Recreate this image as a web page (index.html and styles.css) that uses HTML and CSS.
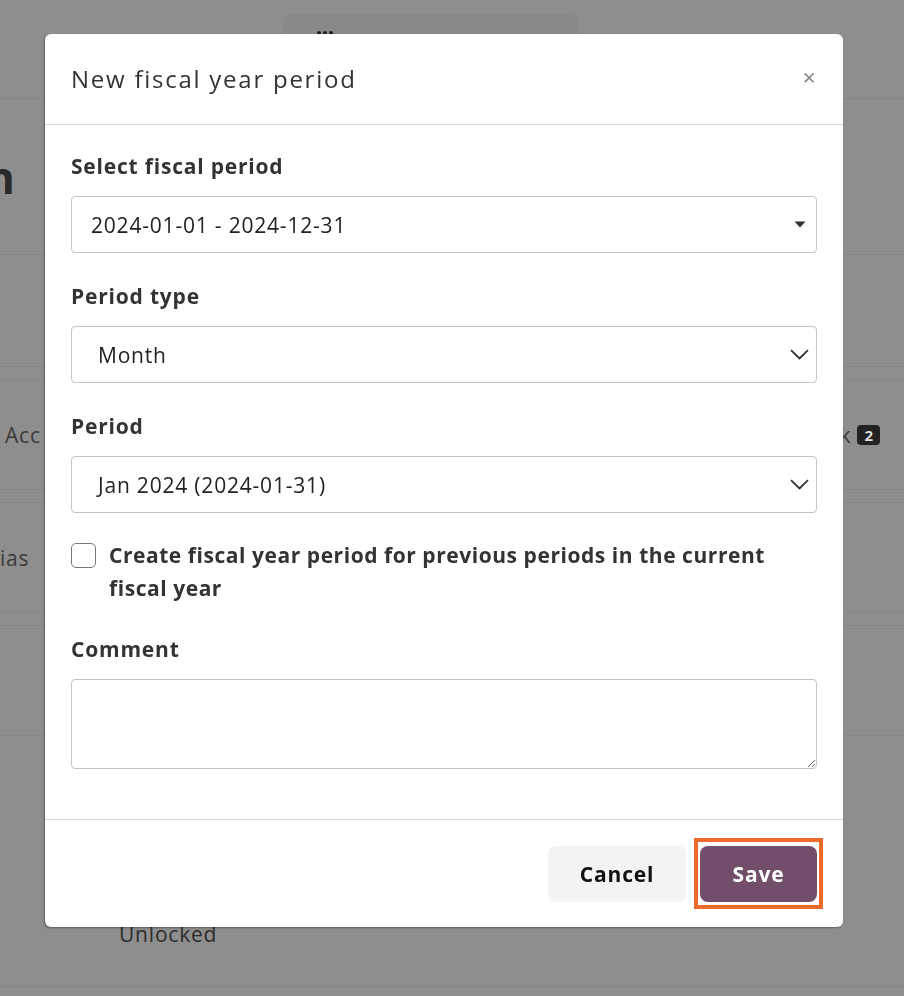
FILE: index.html
```html
<!DOCTYPE html>
<html lang="en">
<head>
<meta charset="utf-8">
<title>New fiscal year period</title>
<link rel="stylesheet" href="styles.css">
</head>
<body>
<div class="page">
  <div class="topbar">
    <div class="pill"><span class="dots"><i></i><i></i><i></i></span></div>
  </div>
  <div class="heading"><span class="h1">n</span></div>
  <div class="row empty"></div>
  <div class="band"></div>
  <div class="row r1"><span class="cell-left">Acc</span><span class="cell-right">k <b class="badge">2</b></span></div>
  <div class="band"></div>
  <div class="row r2"><span class="cell-left2">ias</span></div>
  <div class="band"></div>
  <div class="row"></div>
  <div class="row tall"><span class="unlocked">Unlocked</span></div>
</div>

<div class="modal">
  <div class="modal-header">
    <h2 class="modal-title">New fiscal year period</h2>
    <span class="close">&#x2715;</span>
  </div>
  <div class="modal-body">
    <div class="field">
      <div class="label">Select fiscal period</div>
      <div class="control ctrl-a">
        <span>2024-01-01 - 2024-12-31</span>
        <svg class="caret" width="12" height="7" viewBox="0 0 12 7"><path d="M0.5 0.5 H11.5 L6 6.5 Z" fill="#333"/></svg>
      </div>
    </div>
    <div class="field">
      <div class="label">Period type</div>
      <div class="control ctrl-b">
        <span>Month</span>
        <svg class="chev" width="19" height="11" viewBox="0 0 19 11"><path d="M1 1.2 L9.5 9.5 L18 1.2" fill="none" stroke="#333" stroke-width="1.8"/></svg>
      </div>
    </div>
    <div class="field">
      <div class="label">Period</div>
      <div class="control ctrl-b">
        <span>Jan 2024 (2024-01-31)</span>
        <svg class="chev" width="19" height="11" viewBox="0 0 19 11"><path d="M1 1.2 L9.5 9.5 L18 1.2" fill="none" stroke="#333" stroke-width="1.8"/></svg>
      </div>
    </div>
    <div class="check-row">
      <span class="checkbox"></span>
      <span class="check-label">Create fiscal year period for previous periods in the current fiscal year</span>
    </div>
    <div class="field comment">
      <div class="label">Comment</div>
      <textarea class="textarea"></textarea>
    </div>
  </div>
  <div class="modal-footer">
    <button class="btn btn-cancel">Cancel</button>
    <span class="highlight"><button class="btn btn-save">Save</button></span>
  </div>
</div>
</body>
</html>
```
FILE: styles.css
```css
* { box-sizing: border-box; }
html, body { margin: 0; padding: 0; }
body {
  background: #8e8e8e;
  font-family: "Open Sans", "Noto Sans", sans-serif;
  color: #333;
  width: 904px;
  height: 996px;
  overflow: hidden;
}
.page { width: 904px; }
.topbar {
  height: 99px;
  border-bottom: 1px solid #858585;
  padding: 14px 0 0 283px;
}
.pill {
  width: 295px;
  height: 60px;
  background: #898989;
  border-radius: 10px;
  padding: 17px 0 0 34px;
}
.dots { display: flex; gap: 2px; }
.dots i { width: 4px; height: 4px; border-radius: 50%; background: #1e1e1e; }
.heading {
  height: 156px;
  border-bottom: 1px solid #858585;
  display: flex;
  align-items: center;
}
.h1 { font-size: 44px; font-weight: 700; color: #2a2a2a; margin-left: -14px; }
.row {
  height: 110px;
  border-bottom: 1px solid #858585;
  display: flex;
  align-items: center;
  justify-content: space-between;
  font-size: 21px;
  letter-spacing: 0.8px;
  color: #3a3a3a;
}
.empty { height: 112px; }
.band { height: 13px; border-bottom: 1px solid #858585; }
.cell-left { margin-left: 5px; }
.cell-left2 { margin-left: 0; }
.cell-right { margin-right: 24px; display: flex; align-items: center; gap: 6px; }
.badge {
  background: #222;
  color: #ddd;
  font-size: 15px;
  letter-spacing: 0;
  border-radius: 4px;
  padding: 0 7px;
}
.tall { height: 251px; align-items: flex-end; padding-bottom: 38px; }
.unlocked { margin-left: 119px; color: #2c2c2c; }

.modal {
  position: fixed;
  left: 45px;
  top: 34px;
  width: 798px;
  height: 893px;
  background: #fff;
  border-radius: 6px;
  box-shadow: -1px 1px 2px rgba(0,0,0,0.35);
  display: flex;
  flex-direction: column;
  letter-spacing: 0.8px;
}
.modal-header {
  height: 91px;
  border-bottom: 1px solid #d8d8d8;
  display: flex;
  align-items: center;
  justify-content: space-between;
  padding: 0 26px;
}
.modal-title {
  margin: 0;
  font-size: 24px;
  font-weight: 400;
  letter-spacing: 1.75px;
  color: #333;
  margin-top: -2px;
}
.close { color: #8a8a8a; font-size: 17px; margin-top: -4px; margin-right: 1px; letter-spacing: 0; }
.modal-body {
  flex: 1;
  padding: 26px 26px 0;
  display: flex;
  flex-direction: column;
  gap: 28px;
}
.field { display: flex; flex-direction: column; gap: 15px; }
.label { font-size: 21px; font-weight: 700; line-height: 30px; color: #333; }
.control {
  height: 57px;
  border: 1px solid #c4c4c4;
  border-radius: 4px;
  display: flex;
  align-items: center;
  justify-content: space-between;
  font-size: 21px;
  color: #222;
}
.ctrl-a { padding: 0 10px 0 19px; }
.ctrl-b { padding: 0 7px 0 26px; }
.check-row { display: flex; gap: 13px; margin-top: -2px; }
.checkbox {
  flex: none;
  width: 25px;
  height: 25px;
  border: 1.5px solid #777;
  border-radius: 5px;
  margin-top: 4px;
}
.check-label { font-size: 21px; font-weight: 700; line-height: 33px; color: #333; letter-spacing: 0.55px; }
.comment { margin-top: 1px; }
.textarea {
  height: 90px;
  border: 1px solid #c4c4c4;
  border-radius: 4px;
  resize: vertical;
  font-family: inherit;
  font-size: 20px;
  outline: none;
}
.modal-footer {
  height: 108px;
  border-top: 1px solid #d8d8d8;
  display: flex;
  align-items: center;
  justify-content: flex-end;
  gap: 8px;
  padding: 0 20px 0 26px;
}
.btn {
  height: 56px;
  border: none;
  border-radius: 8px;
  font-family: inherit;
  font-size: 21px;
  font-weight: 700;
  letter-spacing: 0.8px;
}
.btn-cancel { width: 138px; background: #f3f3f3; color: #111; }
.highlight {
  display: flex;
  border: 4px solid #ee6a2c;
  padding: 4px 2px 3px;
  margin-top: -1px;
}
.btn-save {
  width: 117px;
  background: #714f6b;
  color: #fff;
}
```
